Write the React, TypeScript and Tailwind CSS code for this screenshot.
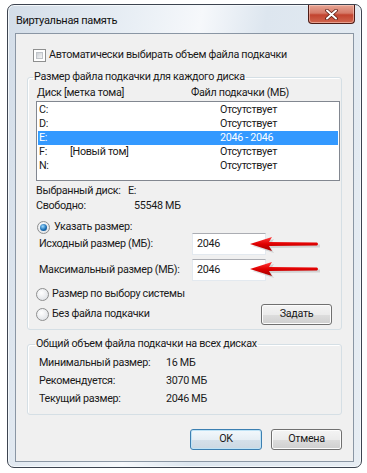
import React from "react";

const font = { fontFamily: 'Roboto, "Noto Sans", sans-serif' };

function Checkbox() {
  return (
    <div className="w-[13px] h-[13px] border border-[#8e8f8f] bg-white p-[2px] shrink-0">
      <div className="w-full h-full bg-[linear-gradient(135deg,#cbcfd5,#f6f6f6)] border border-[#c0c4c9]" />
    </div>
  );
}

function Radio({ checked }: { checked?: boolean }) {
  return (
    <div className="w-[13px] h-[13px] rounded-full border border-[#8e8f8f] bg-[radial-gradient(circle_at_40%_35%,#ffffff,#d8dbe0)] flex items-center justify-center shrink-0">
      {checked && (
        <div className="w-[7px] h-[7px] rounded-full bg-[radial-gradient(circle_at_40%_35%,#9fdcff,#1b6fb5_55%,#0b3f73)]" />
      )}
    </div>
  );
}

function Arrow() {
  return (
    <svg width="72" height="18" viewBox="0 0 72 18">
      <defs>
        <linearGradient id="ar" x1="0" y1="0" x2="0" y2="1">
          <stop offset="0" stopColor="#ff3a3a" />
          <stop offset="0.5" stopColor="#e00000" />
          <stop offset="1" stopColor="#a00000" />
        </linearGradient>
      </defs>
      <path d="M2 10 L24 3 L21 8 L70 8.5 L70 11.5 L21 12 L24 17 Z" fill="#000" opacity="0.12" transform="translate(1,1)" />
      <path d="M1 9 L23 2 L20 7 L68 7.5 Q70 9 68 10.5 L20 11 L23 16 Z" fill="url(#ar)" />
    </svg>
  );
}

function Btn({ children, focused, w }: { children: React.ReactNode; focused?: boolean; w: string }) {
  return (
    <div
      className={
        "h-[21px] rounded-[3px] border flex items-center justify-center text-[#1a1a1a] " +
        w +
        (focused
          ? " border-[#3c7fb1] bg-[linear-gradient(#f2f8fc_0%,#e6eef4_50%,#d4e0ea_51%,#ccd8e2_100%)] shadow-[inset_0_0_0_1px_#bfe3f6]"
          : " border-[#707070] bg-[linear-gradient(#f4f4f4_0%,#ebebeb_50%,#dddddd_51%,#cfcfcf_100%)] shadow-[inset_0_0_0_1px_#fcfcfc]")
      }
    >
      {children}
    </div>
  );
}

const rows = [
  { d: "C:", l: "", v: "Отсутствует" },
  { d: "D:", l: "", v: "Отсутствует" },
  { d: "E:", l: "", v: "2046 - 2046", sel: true },
  { d: "F:", l: "[Новый том]", v: "Отсутствует" },
  { d: "N:", l: "", v: "Отсутствует" },
];

export default function App() {
  return (
    <div
      className="w-[367px] h-[473px] bg-white pt-[4px] pl-[7px] text-[#1a1a1a] text-[10.75px] tracking-[-0.3px] whitespace-nowrap"
      style={font}
    >
      <div className="w-[355px] h-[464px] rounded-[7px] border border-[#3d4450] bg-[linear-gradient(100deg,#d3dde8_0%,#e9eff5_30%,#f6f8fb_45%,#dde6ef_60%,#e7edf3_100%)] flex flex-col shadow-[inset_0_0_0_1px_#f4f8fb]">
        <div className="h-[28px] flex items-start justify-between pl-[8px] pr-[6px] shrink-0">
          <div className="text-[11px] leading-[16px] mt-[8px] text-[#111]">Виртуальная память</div>
          <div className="w-[47px] h-[19px] rounded-b-[4px] border border-t-0 border-[#4d1c16] bg-[linear-gradient(#e8a594_0%,#d57a68_45%,#c2432f_55%,#d1674f_100%)] flex items-center justify-center shadow-[inset_0_0_0_1px_rgba(255,220,210,0.5)]">
            <svg width="13" height="11" viewBox="0 0 13 11">
              <path d="M2 1.5 L11 9.5 M11 1.5 L2 9.5" stroke="#5a1c12" strokeWidth="3.6" strokeLinecap="round" />
              <path d="M2 1.5 L11 9.5 M11 1.5 L2 9.5" stroke="#ffffff" strokeWidth="2" strokeLinecap="round" />
            </svg>
          </div>
        </div>
        <div className="mx-[7px] mb-[5px] flex-1 border border-[#8a96a4] bg-[#f0f0f0] pl-[11px] pr-[11px] flex flex-col">
          <div className="mt-[14px] h-[14px] flex items-center gap-[3px] ml-[6px]">
            <Checkbox />
            <span className="leading-[14px]">Автоматически выбирать объем файла подкачки</span>
          </div>

          <fieldset className="mt-[7px] border border-[#d5dfe5] rounded-[3px] pl-[6px] pr-[1px] pb-[5px] shadow-[inset_1px_1px_0_#ffffff]">
            <legend className="leading-[16px] px-[1px] -ml-[1px]">Размер файла подкачки для каждого диска</legend>
            <div className="h-[16px] flex items-center ml-[3px]">
              <span className="w-[154px]">Диск [метка тома]</span>
              <span>Файл подкачки (МБ)</span>
            </div>
            <div className="h-[80px] ml-[2px] border border-[#828790] bg-white pt-[1px] px-[1px]">
              {rows.map((r) => (
                <div
                  key={r.d}
                  className={"h-[14px] flex items-center leading-[14px] " + (r.sel ? "bg-[#3399ff] text-white" : "")}
                >
                  <span className="w-[32px] pl-[1px]">{r.d}</span>
                  <span className="w-[150px]">{r.l}</span>
                  <span>{r.v}</span>
                </div>
              ))}
            </div>
            <div className="mt-[3px] h-[15px] flex items-center ml-[2px]">
              <span className="w-[92px]">Выбранный диск:</span>
              <span>E:</span>
            </div>
            <div className="h-[15px] flex items-center ml-[2px]">
              <span className="w-[98px]">Свободно:</span>
              <span>55548 МБ</span>
            </div>
            <div className="mt-[7px] h-[12px] flex items-center gap-[4px] ml-[3px]">
              <Radio checked />
              <span>Указать размер:</span>
            </div>
            <div className="relative h-[22px] flex items-center ml-[5px]">
              <span className="w-[153px]">Исходный размер (МБ):</span>
              <div className="w-[74px] h-[22px] border border-[#e3e9ef] border-t-[#abadb3] bg-white pl-[4px] flex items-center">2046</div>
              <div className="absolute left-[210px] top-[2px]">
                <Arrow />
              </div>
            </div>
            <div className="relative mt-[4px] h-[22px] flex items-center ml-[5px]">
              <span className="w-[153px]">Максимальный размер (МБ):</span>
              <div className="w-[74px] h-[22px] border border-[#e3e9ef] border-t-[#abadb3] bg-white pl-[4px] flex items-center">2046</div>
              <div className="absolute left-[210px] top-[1px]">
                <Arrow />
              </div>
            </div>
            <div className="mt-[6px] h-[14px] flex items-center gap-[3px] ml-[2px]">
              <Radio />
              <span>Размер по выбору системы</span>
            </div>
            <div className="mt-[3px] h-[20px] flex items-center ml-[2px] pr-[8px]">
              <Radio />
              <span className="ml-[3px] flex-1">Без файла подкачки</span>
              <Btn w="w-[71px]">Задать</Btn>
            </div>
          </fieldset>

          <fieldset className="mt-[6px] border border-[#d5dfe5] rounded-[3px] pl-[8px] pr-[1px] pb-[6px] shadow-[inset_1px_1px_0_#ffffff]">
            <legend className="leading-[16px] px-[1px] -ml-[1px]">Общий объем файла подкачки на всех дисках</legend>
            {[
              ["Минимальный размер:", "16 МБ"],
              ["Рекомендуется:", "3070 МБ"],
              ["Текущий размер:", "2046 МБ"],
            ].map(([a, b], i) => (
              <div key={a} className={"h-[18px] flex items-center ml-[3px] " + (i === 0 ? "mt-[2px]" : "")}>
                <span className="w-[127px]">{a}</span>
                <span>{b}</span>
              </div>
            ))}
          </fieldset>

          <div className="mt-[14px] flex justify-end gap-[9px]">
            <Btn w="w-[72px]" focused>
              OK
            </Btn>
            <Btn w="w-[71px]">Отмена</Btn>
          </div>
        </div>
      </div>
    </div>
  );
}
